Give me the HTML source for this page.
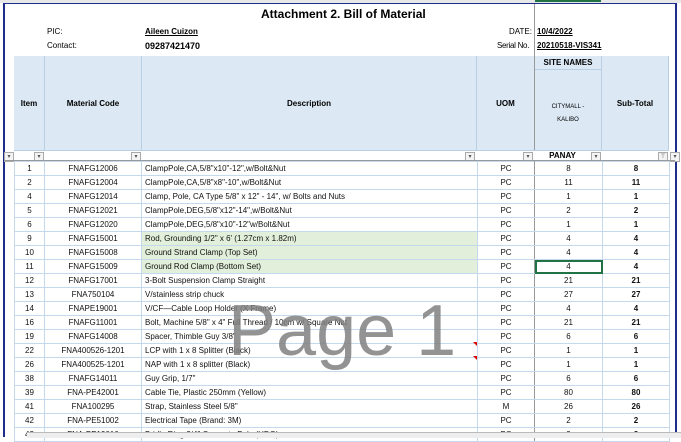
<!DOCTYPE html>
<html><head><meta charset="utf-8"><style>
body{margin:0;width:681px;height:437px;overflow:hidden;background:#fff;font-family:"Liberation Sans",sans-serif;position:relative}
.a{position:absolute}
table{position:absolute;left:14px;top:161px;border-collapse:collapse;table-layout:fixed}
td{border:1px solid #c5d9ec;height:13px;padding:0;font-size:8px;line-height:13px;text-align:center;white-space:nowrap;overflow:hidden;color:#111}
td.d{text-align:left;padding-left:3px}
td.s{border-right:1px solid #999}
td.b{font-weight:bold}
.g{background:#e2efda}
.hd{background:#dce9f5;position:absolute;top:56px;height:94px;border-right:1px solid #b8cfe6}
.ht{font-weight:bold;font-size:8px;position:absolute;text-align:center}
.fb{position:absolute;top:152px;width:8px;height:8px;border:1px solid #aaa;background:#f4f4f4;font-size:6px;line-height:8px;text-align:center;color:#555}
</style></head><body>
<div class="a" style="left:0;top:0;width:681px;height:3px;background:#e8e8e8"></div>
<div class="a" style="left:535px;top:0;width:66px;height:2px;background:#217346"></div>
<div class="a" style="left:3px;top:3px;width:2px;height:434px;background:#1f2d8a"></div>
<div class="a" style="left:3px;top:3px;width:674px;height:1px;background:#1f2d8a"></div>
<div class="a" style="left:675px;top:3px;width:2px;height:434px;background:#1f2d8a"></div>
<div class="a" style="left:534px;top:4px;width:1px;height:52px;background:#999"></div>
<div class="a" style="left:261px;top:7px;font-size:12px;font-weight:bold">Attachment 2. Bill of Material</div>
<div class="a" style="left:47px;top:27px;font-size:8px">PIC:</div>
<div class="a" style="left:47px;top:41px;font-size:8px">Contact:</div>
<div class="a" style="left:145px;top:27px;font-size:8px;font-weight:bold;text-decoration:underline">Aileen Cuizon</div>
<div class="a" style="left:145px;top:41px;font-size:9px;font-weight:bold">09287421470</div>
<div class="a" style="left:509px;top:27px;font-size:8px">DATE:</div>
<div class="a" style="left:497px;top:41px;font-size:8px;letter-spacing:-0.3px">Serial No.</div>
<div class="a" style="left:537px;top:27px;font-size:8px;font-weight:bold;text-decoration:underline">10/4/2022</div>
<div class="a" style="left:537px;top:41px;font-size:8px;font-weight:bold;text-decoration:underline">20210518-VIS341</div>

<div class="hd" style="left:14px;width:30px"></div>
<div class="hd" style="left:45px;width:96px"></div>
<div class="hd" style="left:142px;width:334px"></div>
<div class="hd" style="left:477px;width:57px"></div>
<div class="hd" style="width:66px;border-left:1px solid #999;left:534px"></div>
<div class="hd" style="left:602px;width:66px"></div>
<div class="a" style="left:535px;top:69px;width:66px;height:1px;background:#b8cfe6"></div>
<div class="a" style="left:14px;top:150px;width:655px;height:1px;background:#b8cfe6"></div>
<div class="ht" style="left:14px;width:30px;top:99px">Item</div>
<div class="ht" style="left:45px;width:96px;top:99px">Material Code</div>
<div class="ht" style="left:142px;width:334px;top:99px">Description</div>
<div class="ht" style="left:477px;width:57px;top:99px">UOM</div>
<div class="ht" style="left:535px;width:66px;top:58px">SITE NAMES</div>
<div class="a" style="left:535px;width:66px;top:101px;font-size:6px;text-align:center;line-height:13px">CITYMALL -<br>KALIBO</div>
<div class="ht" style="left:602px;width:66px;top:99px">Sub-Total</div>
<div class="ht" style="left:535px;width:55px;top:151px">PANAY</div>
<div class="fb" style="left:4px">▾</div><div class="fb" style="left:34px">▾</div><div class="fb" style="left:131px">▾</div>
<div class="fb" style="left:465px">▾</div><div class="fb" style="left:523px">▾</div><div class="fb" style="left:591px">▾</div>
<div class="fb" style="left:658px">⊤</div><div class="fb" style="left:670px">▾</div>
<div class="a" style="left:4px;top:160px;width:671px;height:1px;background:#999"></div>

<table>
<colgroup><col style="width:30px"><col style="width:97px"><col style="width:336px"><col style="width:57px"><col style="width:68px"><col style="width:67px"></colgroup>
<tr><td>1</td><td>FNAFG12006</td><td class="d">ClampPole,CA,5/8"x10"-12",w/Bolt&amp;Nut</td><td class="s">PC</td><td>8</td><td class="b">8</td></tr>
<tr><td>2</td><td>FNAFG12004</td><td class="d">ClampPole,CA,5/8"x8"-10",w/Bolt&amp;Nut</td><td class="s">PC</td><td>11</td><td class="b">11</td></tr>
<tr><td>4</td><td>FNAFG12014</td><td class="d">Clamp, Pole, CA Type 5/8" x 12" - 14", w/ Bolts and Nuts</td><td class="s">PC</td><td>1</td><td class="b">1</td></tr>
<tr><td>5</td><td>FNAFG12021</td><td class="d">ClampPole,DEG,5/8"x12"-14",w/Bolt&amp;Nut</td><td class="s">PC</td><td>2</td><td class="b">2</td></tr>
<tr><td>6</td><td>FNAFG12020</td><td class="d">ClampPole,DEG,5/8"x10"-12"w/Bolt&amp;Nut</td><td class="s">PC</td><td>1</td><td class="b">1</td></tr>
<tr><td>9</td><td>FNAFG15001</td><td class="d g">Rod, Grounding 1/2" x 6' (1.27cm x 1.82m)</td><td class="s">PC</td><td>4</td><td class="b">4</td></tr>
<tr><td>10</td><td>FNAFG15008</td><td class="d g">Ground Strand Clamp (Top Set)</td><td class="s">PC</td><td>4</td><td class="b">4</td></tr>
<tr><td>11</td><td>FNAFG15009</td><td class="d g">Ground Rod Clamp (Bottom Set)</td><td class="s">PC</td><td style="outline:2px solid #217346;outline-offset:-2px">4</td><td class="b">4</td></tr>
<tr><td>12</td><td>FNAFG17001</td><td class="d">3-Bolt Suspension Clamp Straight</td><td class="s">PC</td><td>21</td><td class="b">21</td></tr>
<tr><td>13</td><td>FNA750104</td><td class="d">V/stainless strip chuck</td><td class="s">PC</td><td>27</td><td class="b">27</td></tr>
<tr><td>14</td><td>FNAPE19001</td><td class="d">V/CF—Cable Loop Holder  (X Frame)</td><td class="s">PC</td><td>4</td><td class="b">4</td></tr>
<tr><td>16</td><td>FNAFG11001</td><td class="d">Bolt, Machine 5/8" x 4" Full Thread / 10cm w/ Square Nut</td><td class="s">PC</td><td>21</td><td class="b">21</td></tr>
<tr><td>19</td><td>FNAFG14008</td><td class="d">Spacer, Thimble Guy 3/8"</td><td class="s">PC</td><td>6</td><td class="b">6</td></tr>
<tr><td>22</td><td>FNA400526-1201</td><td class="d">LCP with 1 x 8 Splitter (Black)</td><td class="s">PC</td><td>1</td><td class="b">1</td></tr>
<tr><td>26</td><td>FNA400525-1201</td><td class="d">NAP with 1 x 8 splitter (Black)</td><td class="s">PC</td><td>1</td><td class="b">1</td></tr>
<tr><td>38</td><td>FNAFG14011</td><td class="d">Guy Grip, 1/7"</td><td class="s">PC</td><td>6</td><td class="b">6</td></tr>
<tr><td>39</td><td>FNA-PE42001</td><td class="d">Cable Tie, Plastic 250mm (Yellow)</td><td class="s">PC</td><td>80</td><td class="b">80</td></tr>
<tr><td>41</td><td>FNA100295</td><td class="d">Strap, Stainless Steel 5/8"</td><td class="s">M</td><td>26</td><td class="b">26</td></tr>
<tr><td>42</td><td>FNA-PE51002</td><td class="d">Electrical Tape (Brand: 3M)</td><td class="s">PC</td><td>2</td><td class="b">2</td></tr>
<tr><td>43</td><td>FNA-PE19010</td><td class="d">Bridle Ring 3/4" Concrete Pole (HDG)</td><td class="s">PC</td><td>3</td><td class="b">3</td></tr>
</table>
<div class="a" style="left:473px;top:342px;width:0;height:0;border-left:4px solid transparent;border-top:4px solid #d00"></div>
<div class="a" style="left:473px;top:356px;width:0;height:0;border-left:4px solid transparent;border-top:4px solid #d00"></div>
<div class="a" style="left:228px;top:291px;font-size:72px;color:rgba(128,128,128,0.85);line-height:80px">Page 1</div>
<div class="a" style="left:27px;top:432px;width:654px;height:5px;background:#eee;border-top:1px solid #bbb"></div>
</body></html>
